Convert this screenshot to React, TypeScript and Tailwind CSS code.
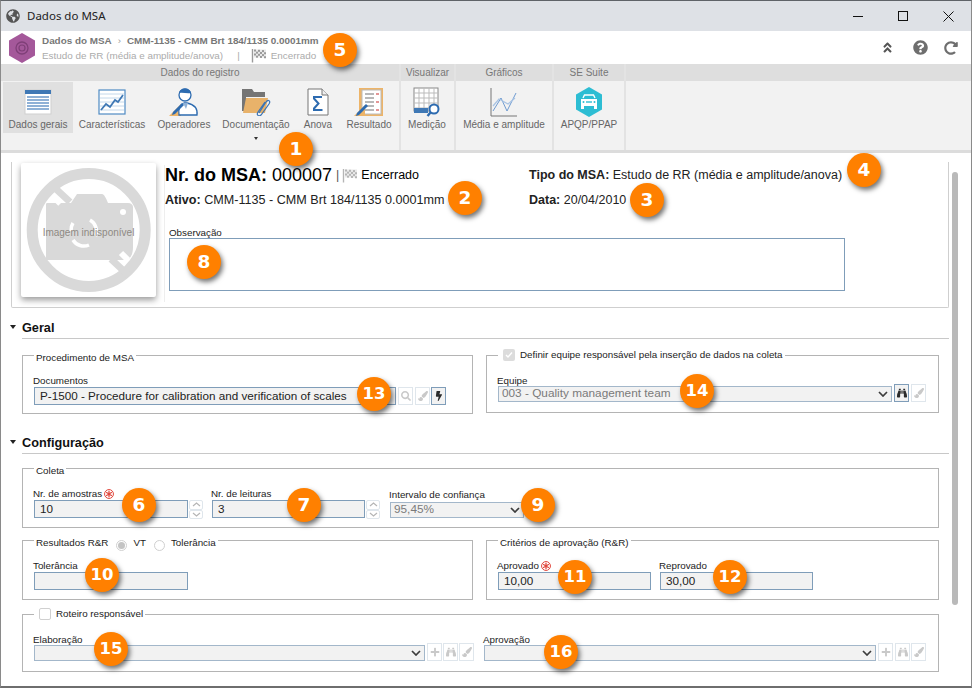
import React from "react";
import { FaAngleDoubleUp, FaBinoculars, FaBolt, FaGlobeAmericas, FaPaintBrush, FaPlus, FaQuestionCircle, FaRedoAlt, FaSearch } from "react-icons/fa";

const Badge = ({ n, className }: { n: string; className: string }) => (
  <div className={"absolute flex h-[34px] w-[34px] items-center justify-center rounded-full bg-[#ff8000] font-bold text-white shadow-[2px_3px_5px_rgba(0,0,0,0.55)] [font-family:'DejaVu_Sans',sans-serif] " + (n.length > 1 ? "text-[16.5px] " : "text-[18.5px] ") + className}>{n}</div>
);

const Flag = ({ size = 15, color = "#9a9a9a" }: { size?: number; color?: string }) => {
  const cells: React.ReactNode[] = [];
  for (let r = 0; r < 4; r++) for (let c = 0; c < 6; c++) if ((r + c) % 2 === 0) cells.push(<rect key={r + "-" + c} x={3 + c * 2} y={1.5 + r * 2 + c * 0.15} width="2" height="2" fill={color} />);
  return (
    <svg width={size} height={size} viewBox="0 0 15 15" className="shrink-0">
      <path d="M1.5 1v13.5" stroke={color} strokeWidth="1.4" />
      <path d="M3 1.5h12v8H3z" fill="#d8d8d8" opacity=".55" />
      {cells}
    </svg>
  );
};

const Required = () => (
  <svg width="10" height="10" viewBox="0 0 9 9" className="shrink-0">
    <circle cx="4.5" cy="4.5" r="4" fill="#fff" stroke="#e0463c" strokeWidth=".9" />
    <path d="M4.5 1.5v6M1.9 3l5.2 3M1.9 6l5.2-3" stroke="#e0463c" strokeWidth="1.1" />
  </svg>
);

const Chevron = () => (
  <svg width="10" height="6" viewBox="0 0 10 6" className="shrink-0">
    <path d="M1 1l4 4 4-4" fill="none" stroke="#3c3c3c" strokeWidth="1.7" />
  </svg>
);

const IconBtn = ({ icon: Icon, active = false, className = "" }: { icon: React.ComponentType<{ size?: number; color?: string }>; active?: boolean; className?: string }) => (
  <div className={"flex h-[18px] w-[15px] shrink-0 items-center justify-center border " + (active ? "border-[#7f9db9] bg-[#f2f2f2]" : "border-[#dfe6ec] bg-white") + " " + className}>
    <Icon size={10} color={active ? "#2b2b2b" : "#c9c9c9"} />
  </div>
);

const Label = ({ children, required = false }: { children: React.ReactNode; required?: boolean }) => (
  <div className="-ml-px flex h-[12px] items-center gap-[2px] text-[9.8px] leading-[12px] text-[#222]">{children}{required && <Required />}</div>
);

const Field = ({ value = "", className = "" }: { value?: string; className?: string }) => (
  <div className={"flex h-[18px] items-center border border-[#7f9db9] bg-[#f2f2f2] pl-[5px] text-[11.7px] text-[#222] " + className}>{value}</div>
);

const SelectBox = ({ value = "", className = "" }: { value?: string; className?: string }) => (
  <div className={"flex h-[16px] items-center justify-between border border-[#a3b7ca] bg-[#f2f2f2] pl-[3px] pr-[3px] text-[11.8px] text-[#7a7a7a] " + className}>
    <span className="whitespace-nowrap">{value}</span>
    <Chevron />
  </div>
);

const Spinner = () => (
  <div className="ml-px flex h-[19px] w-[14px] flex-col">
    {[0, 1].map((i) => (
      <div key={i} className="flex h-[9.5px] items-center justify-center rounded-[2px] border border-[#dfe6ec]">
        <svg width="9" height="5" viewBox="0 0 9 5">
          <path d={i === 0 ? "M1 4l3.5-3L8 4" : "M1 1l3.5 3L8 1"} fill="none" stroke="#b5b5b5" strokeWidth="1.2" />
        </svg>
      </div>
    ))}
  </div>
);

const Box = ({ legend, className = "", children }: { legend: React.ReactNode; className?: string; children: React.ReactNode }) => (
  <fieldset className={"border border-[#b4b4b4] pl-[11px] " + className}>
    <legend className="flex h-[12px] items-center gap-[5px] px-[2px] text-[9.8px] leading-[12px] text-[#222]">{legend}</legend>
    {children}
  </fieldset>
);

const SectionHead = ({ title, className }: { title: string; className: string }) => (
  <div className={"flex h-[20px] items-start " + className}>
    <div className="-ml-px flex h-[16px] w-[12px] items-center">
      <div className="h-0 w-0 border-x-[3.5px] border-t-[4px] border-x-transparent border-t-[#222]" />
    </div>
    <div className="h-[20px] flex-1 border-b border-[#c8c8c8] text-[12.7px] font-bold leading-[18px] text-[#111]">{title}</div>
  </div>
);

const RibbonItem = ({ label, w, active = false, caret = false, children }: { label: string; w: string; active?: boolean; caret?: boolean; children: React.ReactNode }) => (
  <div className={"flex h-[51px] shrink-0 flex-col items-center pt-[6px] " + w + (active ? " bg-[#e0e0e0]" : "")}>
    <div className="flex h-[27px] items-center justify-center">{children}</div>
    <div className="mt-[3px] whitespace-nowrap text-[10px] leading-[13px] text-[#666]">{label}</div>
    {caret && <div className="mt-[6px] h-0 w-0 border-x-[2.5px] border-t-[3px] border-x-transparent border-t-[#333]" />}
  </div>
);

const RibbonGroup = ({ title, w, children }: { title: string; w: string; children: React.ReactNode }) => (
  <div className={"flex shrink-0 flex-col border-r-2 border-[#e3e3e3] " + w}>
    <div className="flex h-[17px] items-center justify-center bg-[#dedede] text-[10px] text-[#777]">{title}</div>
    <div className="flex h-[69px] pt-px">{children}</div>
  </div>
);

const IcoGeneral = () => (
  <svg width="28" height="26" viewBox="0 0 28 26">
    <rect x="1" y="1" width="26" height="24" fill="#fff" stroke="#cfcfcf" />
    <rect x="1" y="1" width="26" height="4" fill="#3f78b5" />
    {[7, 10, 13, 16, 19].map((y) => <rect key={y} x="3" y={y} width="22" height="2" fill="#8fb1d6" />)}
  </svg>
);
const IcoChart = () => (
  <svg width="28" height="26" viewBox="0 0 28 26">
    <rect x="1" y="1" width="26" height="24" fill="#fff" stroke="#4f8bc4" strokeWidth="1.2" />
    {[5, 9, 13, 17, 21].map((y) => <path key={y} d={`M2 ${y}h24`} stroke="#c4d8ea" />)}
    <path d="M3 21l5-6 4 3 5-7 3 2 5-7" fill="none" stroke="#3f78b5" strokeWidth="1.8" />
  </svg>
);
const IcoPeople = () => (
  <svg width="30" height="30" viewBox="0 0 30 30">
    <path d="M0 29L12 17v12z" fill="#edb468" />
    <circle cx="16" cy="8" r="6" fill="#fff" stroke="#2d6bb0" strokeWidth="1.3" />
    <path d="M10 6c1-6 11-6 12 0-4 1-8-1-12 0z" fill="#2d6bb0" />
    <path d="M10 28c-1-8 2-11 5-12h3c5 1 11 4 10 12z" fill="#fff" stroke="#2d6bb0" strokeWidth="1.3" />
    <path d="M14 16l3 6 2-6z" fill="#8fb1d6" />
    <path d="M4 25l9-9 2 2-9 9-3 1z" fill="#2d6bb0" />
  </svg>
);
const IcoFolder = () => (
  <svg width="30" height="28" viewBox="0 0 30 28">
    <path d="M1 1h10l2 3h11v5H5v14H1z" fill="#757575" />
    <path d="M5 10h22l-3 15H2z" fill="#e8b26a" />
    <path d="M18 25l7-11c2-3 5-1 3 2l-8 11c-2 2-5 0-3-3l7-10" fill="none" stroke="#3b74b4" strokeWidth="1.2" />
  </svg>
);
const IcoDoc = () => (
  <svg width="24" height="28" viewBox="0 0 24 28">
    <path d="M2 1h14l6 6v20H2z" fill="#fff" stroke="#777" />
    <path d="M16 1v6h6" fill="#eee" stroke="#777" />
    <path d="M16 9H8v1.5l4.5 5-4.5 5V22h8.5" fill="none" stroke="#2d6bb0" strokeWidth="2" />
  </svg>
);
const IcoResult = () => (
  <svg width="30" height="30" viewBox="0 0 30 30">
    <rect x="5" y="1" width="24" height="28" fill="#edb468" />
    <rect x="8" y="3" width="19" height="24" fill="#fff" stroke="#bbb" />
    {[7, 11, 15, 19, 23].map((y) => <path key={y} d={`M11 ${y}h9`} stroke="#888" strokeWidth="1.2" />)}
    {[7, 15, 23].map((y) => <path key={y} d={`M22 ${y}h3`} stroke="#d05050" strokeWidth="1.2" />)}
    <path d="M0 29L11 18v11z" fill="#edb468" />
    <path d="M3 26l9-9 2 2-9 9-3 1z" fill="#2d6bb0" />
  </svg>
);
const IcoGrid = () => (
  <svg width="30" height="30" viewBox="0 0 30 30">
    <rect x="2" y="1" width="24" height="23" fill="#fff" stroke="#888" />
    {[6, 11, 16, 21].map((y) => <path key={y} d={`M2 ${y}h24`} stroke="#bbb" />)}
    {[7, 12, 17, 22].map((x) => <path key={x} d={`M${x} 1v23`} stroke="#bbb" />)}
    <rect x="2" y="21" width="14" height="5" fill="#3f78b5" />
    <circle cx="22" cy="22" r="4.5" fill="#fff" stroke="#2d6bb0" strokeWidth="2" />
    <path d="M18.5 25.5L15.5 29" stroke="#2d6bb0" strokeWidth="2.4" />
  </svg>
);
const IcoLines = () => (
  <svg width="28" height="30" viewBox="0 0 28 30">
    <path d="M1 1v28h26" fill="none" stroke="#777" />
    <path d="M3 24l8-13 6 13 9-18" fill="none" stroke="#6f9bd0" strokeWidth="1" />
    <path d="M3 19l6-7 9 5 7-6" fill="none" stroke="#a9c4e4" strokeWidth="1.3" />
  </svg>
);
const IcoCar = () => (
  <svg width="28" height="32" viewBox="0 0 28 32">
    <path d="M14 1l13 7.5v15L14 31 1 23.5v-15z" fill="#2dbdd3" />
    <path d="M8 12l1.500-3h9l1.500 3" fill="none" stroke="#fff" strokeWidth="1.4" />
    <path d="M6 13h16v7H6z" fill="#fff" />
    <path d="M6 20h3v3H6zM19 20h3v3h-3z" fill="#fff" />
    <path d="M11 16h6" stroke="#2dbdd3" strokeWidth="1.4" />
    <circle cx="8.500" cy="16" r="1" fill="#2dbdd3" /><circle cx="19.500" cy="16" r="1" fill="#2dbdd3" />
  </svg>
);

const NoImage = () => (
  <svg width="135" height="134" viewBox="0 0 135 134" className="absolute inset-0">
    <circle cx="67.700" cy="67" r="56.500" fill="none" stroke="#d9d9d9" strokeWidth="11" />
    <path d="M26 40h24l6-9h25c2 0 4 4 6 9h20c3 0 5 2 5 4v40c0 8-3 13-8 13H26c-1 0-1-1-1-2V42c0-1 0-2 1-2z" fill="#d9d9d9" />
    <circle cx="102" cy="49" r="3" fill="#fff" />
    <path d="M69 57a12.700 12.700 0 0 1 5.500 16" fill="none" stroke="#fff" strokeWidth="3.500" />
    <path d="M52 77a12.700 12.700 0 0 0 16 5" fill="none" stroke="#fff" strokeWidth="3.500" />
    <path d="M52 60a12.700 12.700 0 0 0-2 8" fill="none" stroke="#fff" strokeWidth="3.500" />
    <path d="M31 33l8 8" stroke="#fff" strokeWidth="5" />
    <path d="M100 90l7 7" stroke="#fff" strokeWidth="6" />
    <path d="M35 26l14 13" stroke="#d9d9d9" strokeWidth="7" />
    <path d="M90 96l17 16" stroke="#d9d9d9" strokeWidth="7" />
  </svg>
);

export default function App() {
  return (
    <div className="relative h-[688px] w-[972px] overflow-hidden border-x border-t border-b-2 border-x-[#8a8a8a] border-t-[#5f6368] border-b-[#6e6e6e] bg-white [font-family:'Liberation_Sans',Arial,sans-serif]">
      <div className="flex h-[30px] items-center bg-[#dee1e6] pl-[5px]">
        <FaGlobeAmericas size={14} color="#555" />
        <div className="ml-[7px] text-[11.5px] text-[#222] [font-family:'Noto_Sans',sans-serif]">Dados do MSA</div>
        <div className="ml-auto flex items-center pr-[17px]">
          <div className="h-px w-[10px] bg-[#111]" />
          <div className="ml-[35px] h-[10px] w-[10px] border border-[#111]" />
          <svg width="11" height="11" viewBox="0 0 11 11" className="ml-[35px]"><path d="M.5.5l10 10M10.500.5l-10 10" stroke="#111" /></svg>
        </div>
      </div>

      <div className="flex h-[33px] items-center bg-white pl-[7px]">
        <svg width="28" height="30" viewBox="0 0 28 30" className="shrink-0">
          <path d="M14 0l13 7.500v15L14 30 1 22.500v-15z" fill="#a4589a" />
          <circle cx="14" cy="15" r="6" fill="none" stroke="#7f3f78" strokeWidth="1.3" />
          <circle cx="14" cy="15" r="3" fill="none" stroke="#7f3f78" strokeWidth="1.2" />
        </svg>
        <div className="ml-[6px] flex flex-col text-[9.9px] leading-[15px]">
          <div className="flex items-center font-bold text-[#777]">
            <span>Dados do MSA</span>
            <span className="mx-[6px] font-normal text-[#999]">›</span>
            <span>CMM-1135 - CMM Brt 184/1135 0.0001mm</span>
          </div>
          <div className="flex items-center text-[#ababab]">
            <span>Estudo de RR (média e amplitude/anova)</span>
            <span className="ml-[14px]">|</span>
            <span className="ml-[11px]"><Flag /></span>
            <span className="ml-[5px]">Encerrado</span>
          </div>
        </div>
        <div className="ml-auto flex items-center pr-[13px]">
          <FaAngleDoubleUp size={13} color="#555" />
          <FaQuestionCircle size={15} color="#6e6e6e" className="ml-[19px]" />
          <FaRedoAlt size={14} color="#6e6e6e" className="ml-[16px]" />
        </div>
      </div>

      <div className="flex bg-[#f2f2f2]">
        <RibbonGroup title="Dados do registro" w="w-[400px]">
          <div className="w-[2px]" />
          <RibbonItem label="Dados gerais" w="w-[70px]" active><IcoGeneral /></RibbonItem>
          <RibbonItem label="Características" w="w-[78px]"><IcoChart /></RibbonItem>
          <RibbonItem label="Operadores" w="w-[66px]"><IcoPeople /></RibbonItem>
          <RibbonItem label="Documentação" w="w-[78px]" caret><IcoFolder /></RibbonItem>
          <RibbonItem label="Anova" w="w-[46px]"><IcoDoc /></RibbonItem>
          <RibbonItem label="Resultado" w="w-[56px]"><IcoResult /></RibbonItem>
        </RibbonGroup>
        <RibbonGroup title="Visualizar" w="w-[55px]">
          <RibbonItem label="Medição" w="w-[52px]"><IcoGrid /></RibbonItem>
        </RibbonGroup>
        <RibbonGroup title="Gráficos" w="w-[98px]">
          <RibbonItem label="Média e amplitude" w="w-[96px]"><IcoLines /></RibbonItem>
        </RibbonGroup>
        <RibbonGroup title="SE Suite" w="w-[72px]">
          <RibbonItem label="APQP/PPAP" w="w-[70px]"><IcoCar /></RibbonItem>
        </RibbonGroup>
        <div className="flex-1"><div className="h-[17px] bg-[#dedede]" /></div>
      </div>
      <div className="h-[3px] bg-[#dcdcdc]" />

      <div className="relative flow-root pl-[10px]">
        <div className="absolute left-[951px] top-[19px] h-[433px] w-[6px] rounded-[3px] bg-[#b9b9b9]" />
        <div className="w-[938px]">
          <div className="mt-[9px] flex h-[146px] rounded-b-[2px] border-x border-b border-[#cfcfcf]">
            <div className="relative ml-[9px] mt-px h-[134px] w-[135px] shrink-0 rounded-[2px] bg-white shadow-[0_3px_6px_rgba(0,0,0,0.4)]">
              <NoImage />
              <div className="absolute inset-x-0 top-[62px] text-center text-[10px] text-[#8e8983]">Imagem indisponível</div>
            </div>
            <div className="ml-[8px] mt-[3px] flex h-[137px] flex-1 flex-col border-l border-[#eeeeee]">
              <div className="flex h-[73px] text-[12.5px] text-[#222]">
                <div className="w-[364px]">
                  <div className="flex h-[20px] items-center text-black">
                    <span className="text-[18px] font-bold">Nr. do MSA:</span>
                    <span className="ml-[5px] text-[18px]">000007</span>
                    <span className="ml-[4px] text-[#555]">|</span>
                    <span className="ml-[3px]"><Flag size={15} color="#b5b5b5" /></span>
                    <span className="ml-[4px]">Encerrado</span>
                  </div>
                  <div className="mt-[8px] h-[14px] text-[12.6px] leading-[14px]"><b>Ativo:</b> CMM-1135 - CMM Brt 184/1135 0.0001mm</div>
                </div>
                <div className="pt-[2px]">
                  <div className="h-[16px] leading-[16px]"><b>Tipo do MSA:</b> Estudo de RR (média e amplitude/anova)</div>
                  <div className="mt-[10px] h-[14px] leading-[14px]"><b>Data:</b> 20/04/2010</div>
                </div>
              </div>
              <div className="ml-[4px] -mt-[11px]">
                <div className="h-[11px] text-[9.8px] leading-[12px] text-[#222]">Observação</div>
                <div className="h-[53px] w-[676px] border border-[#7f9db9] bg-white" />
              </div>
            </div>
          </div>

          <SectionHead title="Geral" className="mt-[11px]" />
          <div className="ml-[11px] mt-[10px] flex">
            <Box legend={<span className="translate-y-[3px]">Procedimento de MSA</span>} className="h-[65px] w-[451px]">
              <div className="pt-[14px]">
                <Label>Documentos</Label>
                <div className="flex gap-px">
                  <Field value="P-1500 - Procedure for calibration and verification of scales" className="w-[362px]" />
                  <IconBtn icon={FaSearch} className="ml-px" />
                  <IconBtn icon={FaPaintBrush} className="ml-px" />
                  <IconBtn icon={FaBolt} active />
                </div>
              </div>
            </Box>
            <Box
              className="ml-[13px] h-[64px] w-[453px]"
              legend={
                <>
                  <span className="ml-[3px] flex h-[12px] w-[12px] items-center justify-center rounded-[2px] bg-[#dcdcdc]">
                    <svg width="8" height="8" viewBox="0 0 8 8"><path d="M1 4l2 2 4-4.500" fill="none" stroke="#fff" strokeWidth="1.400" /></svg>
                  </span>
                  <span className="whitespace-nowrap">Definir equipe responsável pela inserção de dados na coleta</span>
                </>
              }
            >
              <div className="pt-[14px]">
                <Label>Equipe</Label>
                <div className="-mt-[3px] flex items-end">
                  <SelectBox value="003 - Quality management team" className="w-[394px]" />
                  <IconBtn icon={FaBinoculars} active className="ml-[2px]" />
                  <IconBtn icon={FaPaintBrush} className="ml-[2px]" />
                </div>
              </div>
            </Box>
          </div>

          <SectionHead title="Configuração" className="mt-[20px]" />
          <div className="ml-[11px]">
            <Box legend={<span className="translate-y-[3px]">Coleta</span>} className="mt-[8px] h-[66px] w-[917px]">
              <div className="flex pt-[14px]">
                <div>
                  <Label required>Nr. de amostras</Label>
                  <div className="flex"><Field value="10" className="w-[154px]" /><Spinner /></div>
                </div>
                <div className="ml-[9px]">
                  <Label>Nr. de leituras</Label>
                  <div className="flex"><Field value="3" className="w-[153px]" /><Spinner /></div>
                </div>
                <div className="ml-[10px] pt-px">
                  <Label>Intervalo de confiança</Label>
                  <SelectBox value="95,45%" className="mt-[1px] w-[134px]" />
                </div>
              </div>
            </Box>

            <div className="mt-[6px] flex">
              <Box
                className="h-[66px] w-[451px]"
                legend={
                  <>
                    <span className="translate-y-[3px]">Resultados R&amp;R</span>
                    <span className="ml-[3px] flex h-[11px] w-[11px] translate-y-[5px] items-center justify-center rounded-full border border-[#d0d0d0]"><span className="h-[7px] w-[7px] rounded-full bg-[#c4c4c4]" /></span>
                    <span className="ml-px translate-y-[3px]">VT</span>
                    <span className="ml-[3px] h-[11px] w-[11px] translate-y-[5px] rounded-full border border-[#d0d0d0]" />
                    <span className="ml-px translate-y-[3px]">Tolerância</span>
                  </>
                }
              >
                <div className="pt-[14px]">
                  <Label>Tolerância</Label>
                  <Field className="w-[154px]" />
                </div>
              </Box>
              <Box legend={<span className="translate-y-[3px]">Critérios de aprovação (R&amp;R)</span>} className="ml-[13px] h-[66px] w-[453px]">
                <div className="flex pt-[14px]">
                  <div>
                    <Label required>Aprovado</Label>
                    <Field value="10,00" className="w-[153px]" />
                  </div>
                  <div className="ml-[9px]">
                    <Label>Reprovado</Label>
                    <Field value="30,00" className="w-[153px]" />
                  </div>
                </div>
              </Box>
            </div>

            <Box
              className="mt-[8px] h-[64px] w-[917px]"
              legend={
                <>
                  <span className="ml-[3px] h-[12px] w-[12px] rounded-[2px] border border-[#d0d0d0] bg-white" />
                  <span className="whitespace-nowrap">Roteiro responsável</span>
                </>
              }
            >
              <div className="flex pt-[14px]">
                <div className="w-[450px]">
                  <Label>Elaboração</Label>
                  <div className="-mt-[3px] flex items-end">
                    <SelectBox className="w-[391px]" />
                    <IconBtn icon={FaPlus} className="ml-[2px]" />
                    <IconBtn icon={FaBinoculars} className="ml-px" />
                    <IconBtn icon={FaPaintBrush} className="ml-px" />
                  </div>
                </div>
                <div>
                  <Label>Aprovação</Label>
                  <div className="-mt-[3px] flex items-end">
                    <SelectBox className="w-[392px]" />
                    <IconBtn icon={FaPlus} className="ml-[2px]" />
                    <IconBtn icon={FaBinoculars} className="ml-[2px]" />
                    <IconBtn icon={FaPaintBrush} className="ml-px" />
                  </div>
                </div>
              </div>
            </Box>
          </div>
        </div>
      </div>

      <Badge n="1" className="left-[278px] top-[131px]" />
      <Badge n="2" className="left-[447px] top-[180px]" />
      <Badge n="3" className="left-[629px] top-[182px]" />
      <Badge n="4" className="left-[846px] top-[152px]" />
      <Badge n="5" className="left-[322px] top-[32px]" />
      <Badge n="6" className="left-[121px] top-[487px]" />
      <Badge n="7" className="left-[286px] top-[487px]" />
      <Badge n="8" className="left-[186px] top-[244px]" />
      <Badge n="9" className="left-[520px] top-[487px]" />
      <Badge n="10" className="left-[84px] top-[557px]" />
      <Badge n="11" className="left-[557px] top-[559px]" />
      <Badge n="12" className="left-[712px] top-[559px]" />
      <Badge n="13" className="left-[356px] top-[376px]" />
      <Badge n="14" className="left-[679px] top-[373px]" />
      <Badge n="15" className="left-[93px] top-[631px]" />
      <Badge n="16" className="left-[543px] top-[634px]" />
    </div>
  );
}
